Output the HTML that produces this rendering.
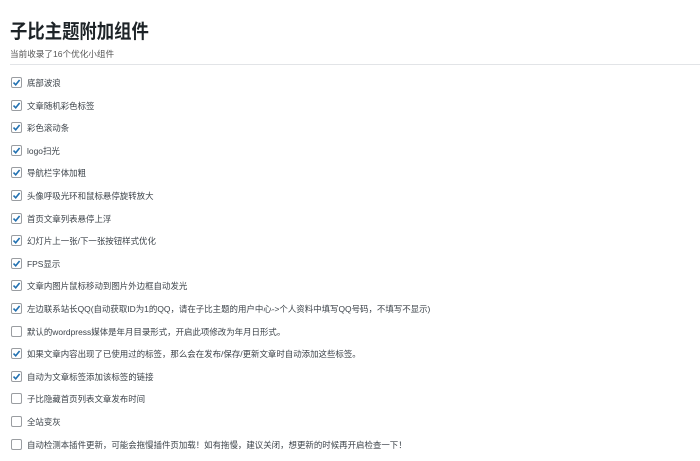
<!DOCTYPE html>
<html><head><meta charset="utf-8"><style>
body{margin:0;background:#fff;width:700px;height:461px;overflow:hidden;font-family:"Liberation Sans","Noto Sans CJK SC",sans-serif;color:#3c434a}
h1{position:absolute;left:10px;top:19px;margin:0;font-size:19.5px;font-weight:bold;color:#1d2327;line-height:26px;letter-spacing:0;transform:scaleX(0.89);transform-origin:0 0}
.sub{position:absolute;left:10px;top:48px;font-size:8.6px;color:#555;line-height:12px}
.hr{position:absolute;left:10px;right:0;top:64px;height:1px;background:#e2e4e7}
.row{position:absolute;left:11px;height:12px;font-size:8.45px;line-height:12px;white-space:nowrap}
.cb{position:absolute;left:0;top:0;width:9px;height:9px;border:1px solid #9a9da1;border-radius:2px;background:#fff}
.row span{position:absolute;left:16px;top:0}
.cb svg{position:absolute;left:0;top:0}
</style></head><body>
<h1>子比主题附加组件</h1>
<div class="sub">当前收录了16个优化小组件</div>
<div class="hr"></div>
<div id="list"></div>
<script>
var items=[["底部波浪",1],["文章随机彩色标签",1],["彩色滚动条",1],["logo扫光",1],["导航栏字体加粗",1],["头像呼吸光环和鼠标悬停旋转放大",1],["首页文章列表悬停上浮",1],["幻灯片上一张/下一张按钮样式优化",1],["FPS显示",1],["文章内图片鼠标移动到图片外边框自动发光",1],["左边联系站长QQ(自动获取ID为1的QQ，请在子比主题的用户中心->个人资料中填写QQ号码，不填写不显示)",1],["默认的wordpress媒体是年月目录形式，开启此项修改为年月日形式。",0],["如果文章内容出现了已使用过的标签，那么会在发布/保存/更新文章时自动添加这些标签。",1],["自动为文章标签添加该标签的链接",1],["子比隐藏首页列表文章发布时间",0],["全站变灰",0],["自动检测本插件更新，可能会拖慢插件页加载！如有拖慢，建议关闭，想更新的时候再开启检查一下！",0]];
var h="";
items.forEach(function(it,i){var y=77+i*22.6;
h+='<div class="row" style="top:'+y.toFixed(1)+'px"><div class="cb">'+(it[1]?'<svg width="9" height="9" viewBox="0 0 9 9"><path d="M1.5 4.6L3.7 6.8L7.6 2" stroke="#2271b1" stroke-width="1.6" fill="none"/></svg>':'')+'</div><span>'+it[0]+'</span></div>';});
document.getElementById("list").innerHTML=h;
</script>
</body></html>
